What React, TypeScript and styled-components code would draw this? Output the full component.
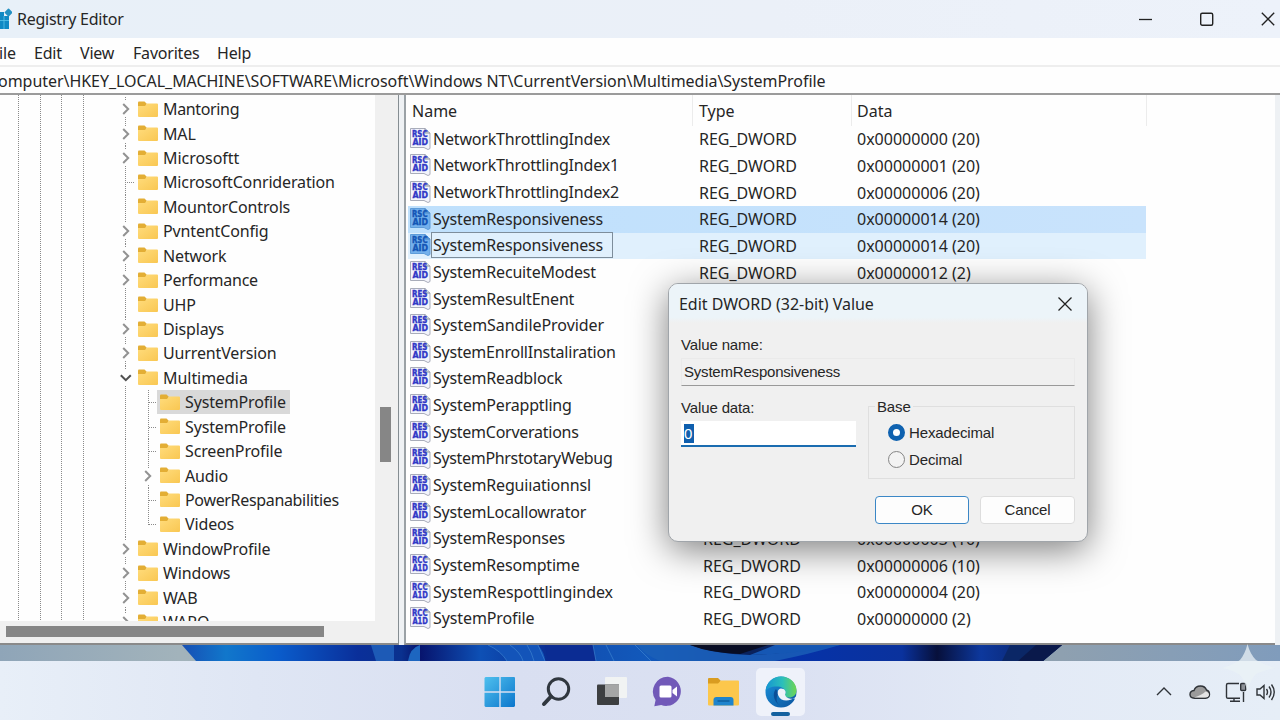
import React from "react";
import styled, { createGlobalStyle, css } from "styled-components";

const GlobalStyle = createGlobalStyle`
  * { box-sizing: border-box; }
  body {
    margin: 0;
    overflow: hidden;
    background: #ffffff;
  }
`;

const Desktop = styled.div`
  position: relative;
  width: 1280px;
  height: 720px;
  overflow: hidden;
  display: flex;
  flex-direction: column;
  font-family: "Noto Sans", "Open Sans", sans-serif;
  font-size: 16px;
  color: #262626;
  white-space: pre;
`;

/* window frame */
const TitleBar = styled.div`
  flex: 0 0 38px;
  display: flex;
  align-items: center;
  background: linear-gradient(to right, #e8f0f8, #ebf0f8 60%, #edf2fa);
`;
const Title = styled.div`
  flex: 1;
  margin-left: 5px;
  letter-spacing: -0.25px;
`;
const WindowButtons = styled.div`
  display: flex;
  gap: 47px;
  margin: -1px 5px 0 0;
`;
const MenuBar = styled.div`
  flex: 0 0 29px;
  display: flex;
  align-items: center;
  padding-top: 2px;
  border-bottom: 2px solid #eeeeee;
  background: #fefefe;
`;
const MenuItem = styled.div<{ $width: number }>`
  flex: 0 0 ${(p) => p.$width}px;
  letter-spacing: -0.2px;
`;
const FileLabel = styled.div`
  margin-left: -9px;
`;
const AddressBar = styled.div`
  flex: 0 0 28px;
  display: flex;
  align-items: center;
  padding-top: 2px;
  border-bottom: 2px solid #9b9b9b;
  background: #fefefe;
  letter-spacing: -0.045px;
`;
const AddressText = styled.div`
  margin-left: -12px;
`;
const Panes = styled.div`
  flex: 0 0 550px;
  display: flex;
  background: #eef1f4;
`;

/* left tree */
const TreePane = styled.div`
  width: 399px;
  display: grid;
  grid-template: 526px 22px / 375px 23px;
  border-right: 1px solid #858d92;
  border-bottom: 2px solid #8a8a8a;
  background: #f0f0f0;
`;
const dots = "repeating-linear-gradient(to bottom, #8a8a8a 0 1px, transparent 1px 2px)";
const Tree = styled.div`
  overflow: hidden;
  padding-top: 2px;
  background: ${dots} 18px 0 / 1px 100% no-repeat, ${dots} 40px 0 / 1px 100% no-repeat,
    ${dots} 61px 0 / 1px 100% no-repeat, ${dots} 83px 0 / 1px 100% no-repeat, #fefefe;
`;
const TreeRow = styled.div<{ $child?: boolean; $last?: boolean }>`
  height: 24.43px;
  display: flex;
  align-items: center;
  padding-left: ${(p) => (p.$child ? 140 : 118)}px;
  background: ${dots} 125px 0 / 1px 100% no-repeat
    ${(p) => p.$child && css`, ${dots} 148px 0 / 1px ${p.$last ? "52%" : "100%"} no-repeat`};
`;
const Expander = styled.div<{ $stub?: boolean }>`
  width: 16px;
  height: 16px;
  display: flex;
  background: ${(p) =>
    p.$stub
      ? "repeating-linear-gradient(to right, #8a8a8a 0 1px, transparent 1px 2px) 9px 8px / 9px 1px no-repeat"
      : "#fefefe"};
`;
const NoExpander = styled.div`
  width: 16px;
`;
const TreeLabel = styled.div<{ $selected?: boolean; $track?: number }>`
  height: 24.4px;
  display: flex;
  align-items: center;
  gap: 5px;
  padding: 0 4px 0 3px;
  margin-left: 1px;
  letter-spacing: ${(p) => p.$track ?? -0.14}px;
  background: ${(p) => (p.$selected ? "#d9d9d9" : "transparent")};
`;
const VScroll = styled.div`
  padding: 312px 0 0 5px;
`;
const VThumb = styled.div`
  width: 11px;
  height: 55px;
  background: #868686;
`;
const HScroll = styled.div`
  grid-column: 1 / 3;
  padding: 5px 0 0 6px;
`;
const HThumb = styled.div`
  width: 318px;
  height: 11px;
  background: #868686;
`;

/* value list */
const ListPane = styled.div`
  width: 871px;
  margin-left: 5px;
  border-left: 2px solid #9aa1a6;
  border-bottom: 2px solid #8a8a8a;
  background: #fefefe;
`;
const Header = styled.div`
  height: 31px;
  display: grid;
  grid-template-columns: 287px 159px 295px;
`;
const HeaderCell = styled.div`
  display: flex;
  align-items: center;
  padding: 1px 0 0 6px;
  border-right: 1px solid #ececec;
  &:last-child {
    padding-left: 5px;
  }
`;
const ValueRow = styled.div<{ $tone?: "strong" | "light" }>`
  width: 738px;
  height: 26.66px;
  margin-left: 2px;
  padding-left: 2px;
  display: grid;
  grid-template-columns: 285px 158px 1fr;
  align-items: center;
  background: ${(p) =>
    p.$tone === "strong"
      ? "linear-gradient(to right, #bfe0fc, #c9e3fc)"
      : p.$tone === "light"
        ? "#e0f0fd"
        : "none"};
`;
const NameCell = styled.div`
  display: flex;
  align-items: center;
  height: 26.66px;
  margin-top: -1.5px;
`;
const NameText = styled.div<{ $boxed?: boolean; $track?: number }>`
  height: 26px;
  line-height: 25px;
  padding: 0 9px 0 1px;
  border: 1px solid ${(p) => (p.$boxed ? "#7d8d9b" : "transparent")};
  letter-spacing: ${(p) => p.$track ?? -0.18}px;
`;
const TypeCell = styled.div<{ $shift?: boolean }>`
  padding-left: ${(p) => (p.$shift ? 8 : 4)}px;
`;
const DataCell = styled.div`
  padding-left: 4px;
`;

/* dialog */
const Dialog = styled.div`
  position: absolute;
  left: 668px;
  top: 283px;
  width: 420px;
  height: 259px;
  border: 1px solid #a0a5aa;
  border-radius: 10px;
  background: #f0f0f0;
  box-shadow: 0 8px 36px rgba(0, 0, 0, 0.5);
  font-family: "Liberation Sans", Arial, sans-serif;
  font-size: 15px;
  letter-spacing: -0.13px;
  overflow: hidden;
`;
const DialogTitle = styled.div`
  height: 39px;
  display: flex;
  align-items: center;
  justify-content: space-between;
  padding: 0 14px 0 10px;
  background: linear-gradient(to bottom, #ecf4f9 85%, #f0f0f0);
  font-family: "Noto Sans", "Open Sans", sans-serif;
  font-size: 16px;
  letter-spacing: -0.03px;
`;
const DialogBody = styled.div`
  padding: 11px 12px 0;
`;
const FieldLabel = styled.div`
  height: 20px;
  line-height: 21px;
`;
const ReadonlyField = styled.div`
  height: 28px;
  margin-top: 4px;
  padding: 0 2px;
  line-height: 26px;
  border: 1px solid #eaeaea;
  border-bottom: 1px solid #999999;
  letter-spacing: -0.2px;
`;
const Columns = styled.div`
  display: flex;
  justify-content: space-between;
  margin-top: 11px;
`;
const ValueInput = styled.div`
  width: 175px;
  height: 26px;
  margin-top: 4px;
  padding: 3px 3px;
  background: #ffffff;
  border-bottom: 2px solid #1a6cb0;
`;
const SelectedText = styled.span`
  display: block;
  width: 10px;
  height: 19px;
  line-height: 19px;
  background: #0f5fae;
  color: #ffffff;
`;
const BaseGroup = styled.div`
  width: 207px;
  height: 73px;
  margin-top: 9px;
  border: 1px solid #dfdfdf;
`;
const Legend = styled.div`
  width: max-content;
  height: 18px;
  line-height: 18px;
  margin: -9px 0 0 6px;
  padding: 0 2px;
  background: #f0f0f0;
`;
const RadioRow = styled.div`
  height: 27.5px;
  display: flex;
  align-items: center;
  gap: 4px;
  padding: 5px 0 0 19px;
`;
const Radio = styled.span<{ $on?: boolean }>`
  width: 17px;
  height: 17px;
  border-radius: 50%;
  border: ${(p) => (p.$on ? "5.5px solid #0f62b0" : "1px solid #858585")};
  background: ${(p) => (p.$on ? "#ffffff" : "#f3f3f3")};
`;
const Actions = styled.div`
  display: flex;
  justify-content: flex-end;
  gap: 11px;
  margin-top: 17px;
`;
const Button = styled.div<{ $primary?: boolean }>`
  width: ${(p) => (p.$primary ? 94 : 95)}px;
  height: 28px;
  line-height: 26px;
  text-align: center;
  border: 1px solid ${(p) => (p.$primary ? "#3b87c6" : "#dddddd")};
  border-radius: 4px;
  background: #fdfdfd;
`;

/* desktop bottom */
const Wallpaper = styled.div`
  flex: 0 0 16px;
  display: flex;
`;
const Taskbar = styled.div`
  flex: 0 0 59px;
  display: flex;
  align-items: center;
  padding: 3px 4px 0 475px;
  background: linear-gradient(to right, #e8eff8 0, #dfe6f4 20%, #d9dff1 40%, #dbe1f2 62%, #e3eaf6 80%, #e6eef7 100%);
`;
const Apps = styled.div`
  flex: 1;
  display: flex;
  gap: 7px;
`;
const AppSlot = styled.div<{ $active?: boolean }>`
  width: 49px;
  height: 48px;
  display: flex;
  flex-direction: column;
  align-items: center;
  justify-content: center;
  border-radius: 5px;
  background: ${(p) => (p.$active ? "#eff2fa" : "none")};
  margin-left: ${(p) => (p.$active ? 1 : 0)}px;
`;
const ActiveMark = styled.div`
  width: 19px;
  height: 4px;
  margin: 4px 0 -8px;
  border-radius: 2px;
  background: #14619f;
`;
const Tray = styled.div`
  display: flex;
  align-items: center;
`;
const Sparkle = styled.svg`
  position: absolute;
  left: 1222px;
  top: 644px;
`;

const FolderIcon = () => (
  <svg width="20" height="17" viewBox="0 0 20 17">
    <defs>
      <linearGradient id="fold" x1="0" y1="0" x2="1" y2="1">
        <stop offset="0" stopColor="#ffdc7c" />
        <stop offset="1" stopColor="#f9c752" />
      </linearGradient>
    </defs>
    <path d="M0 1.500Q0 .5 1 .5H6.500L8.500 2.500V6H0Z" fill="#e3ae35" />
    <path d="M0 5H7L9 2.500H19Q20 2.500 20 3.500V15Q20 16 19 16H1Q0 16 0 15Z" fill="url(#fold)" />
  </svg>
);

const Chevron = ({ open }: { open?: boolean }) => (
  <svg width="16" height="16" viewBox="0 0 16 16" fill="none" stroke={open ? "#505050" : "#929292"} strokeWidth="2">
    {open ? <path d="M2.800 5.200L7.800 10.200L12.800 5.200" /> : <path d="M5.200 3L10.200 8L5.200 13" />}
  </svg>
);

const RegIcon = ({ text, tint }: { text: string[]; tint?: boolean }) => (
  <svg width="21" height="22" viewBox="0 0 21 22">
    <path
      d="M.5 .5H15L20 5V20.500L18 21.500L14 19.500H.5Z"
      fill={tint ? "#74b0ec" : "#f3f4fb"}
      stroke={tint ? "#5e9cd9" : "#a9adba"}
    />
    <path d="M15 .5V5H20" fill={tint ? "#5f9ee0" : "#dcdfe8"} stroke={tint ? "#4b86c4" : "#8d919c"} />
    <g
      fill={tint ? "#1355b5" : "#3038c6"}
      stroke={tint ? "#1355b5" : "#3038c6"}
      strokeWidth=".35"
      fontFamily="DejaVu Sans"
      fontWeight="700"
      fontSize="8"
      letterSpacing="0"
    >
      <text x="2" y="9.200" textLength="15.500" lengthAdjust="spacingAndGlyphs">{text[0]}</text>
      <text x="2.400" y="16.800" textLength="15.500" lengthAdjust="spacingAndGlyphs">{text[1]}</text>
    </g>
  </svg>
);

type Node = {
  name: string;
  arrow?: "closed" | "open";
  stub?: boolean;
  child?: boolean;
  selected?: boolean;
  last?: boolean;
  track?: number;
};
const nodes: Node[] = [
  { name: "Mantoring", arrow: "closed", track: -0.35 },
  { name: "MAL", arrow: "closed" },
  { name: "Microsoftt", arrow: "closed", track: -0.05 },
  { name: "MicrosoftConrideration", stub: true },
  { name: "MountorControls" },
  { name: "PvntentConfig", arrow: "closed" },
  { name: "Network", arrow: "closed" },
  { name: "Performance", arrow: "closed", track: -0.25 },
  { name: "UHP" },
  { name: "Displays", arrow: "closed" },
  { name: "UurrentVersion", arrow: "closed" },
  { name: "Multimedia", arrow: "open", track: -0.05 },
  { name: "SystemProfile", child: true, stub: true, selected: true },
  { name: "SystemProfile", child: true, stub: true },
  { name: "ScreenProfile", child: true, stub: true },
  { name: "Audio", child: true, arrow: "closed" },
  { name: "PowerRespanabilities", child: true, stub: true, track: -0.33 },
  { name: "Videos", child: true, stub: true, last: true },
  { name: "WindowProfile", arrow: "closed" },
  { name: "Windows", arrow: "closed" },
  { name: "WAB", arrow: "closed" },
  { name: "WARO", arrow: "closed" },
];

const RSC = ["RSC", "AID"];
const RES = ["RES", "AID"];
const RCC = ["RCC", "A1D"];
type Value = {
  name: string;
  icon: string[];
  data?: string;
  tone?: "strong" | "light";
  boxed?: boolean;
  shift?: boolean;
  track?: number;
};
const values: Value[] = [
  { name: "NetworkThrottlingIndex", icon: RSC, data: "0x00000000 (20)" },
  { name: "NetworkThrottlingIndex1", icon: RSC, data: "0x00000001 (20)" },
  { name: "NetworkThrottlingIndex2", icon: RSC, data: "0x00000006 (20)" },
  { name: "SystemResponsiveness", icon: RSC, data: "0x00000014 (20)", tone: "strong" },
  { name: "SystemResponsiveness", icon: RSC, data: "0x00000014 (20)", tone: "light", boxed: true },
  { name: "SystemRecuiteModest", icon: RES, data: "0x00000012 (2)" },
  { name: "SystemResultEnent", icon: RES },
  { name: "SystemSandileProvider", icon: RES, track: -0.05 },
  { name: "SystemEnrollInstaliration", icon: RES, track: -0.22 },
  { name: "SystemReadblock", icon: RES },
  { name: "SystemPerapptling", icon: RES },
  { name: "SystemCorverations", icon: RES, track: -0.26 },
  { name: "SystemPhrstotaryWebug", icon: RES, track: -0.33 },
  { name: "SystemReguiıationnsl", icon: RES },
  { name: "SystemLocallowrator", icon: RES },
  { name: "SystemResponses", icon: RES, data: "0x00000003 (10)", shift: true },
  { name: "SystemResomptime", icon: RCC, data: "0x00000006 (10)", shift: true },
  { name: "SystemRespottlingindex", icon: RCC, data: "0x00000004 (20)", shift: true, track: -0.05 },
  { name: "SystemProfile", icon: RCC, data: "0x00000000 (2)", shift: true, track: -0.1 },
];

const AppIcon = () => (
  <svg width="12" height="24" viewBox="0 0 12 24">
    <path d="M0 5H4V9H9V22H0Z" fill="#1089c4" />
    <path d="M0 13.500H9M4 9V22" stroke="#5cc4ea" strokeWidth=".8" />
    <rect x="5.500" y="2.500" width="6" height="6" rx=".8" transform="rotate(45 8.500 5.500)" fill="#2390c2" />
  </svg>
);

const WallpaperArt = () => (
  <svg width="1280" height="16" viewBox="0 0 1280 16">
    <defs>
      <linearGradient id="sky" x1="0" x2="1">
        <stop offset="0" stopColor="#8fa5b8" />
        <stop offset=".14" stopColor="#a2b3bb" />
        <stop offset=".83" stopColor="#8ea0b0" />
        <stop offset="1" stopColor="#809cbc" />
      </linearGradient>
      <linearGradient id="bloom" gradientUnits="userSpaceOnUse" x1="182" x2="1060">
        <stop offset="0" stopColor="#174fb4" />
        <stop offset=".05" stopColor="#1177cb" />
        <stop offset=".11" stopColor="#0a5ccb" />
        <stop offset=".2" stopColor="#0a2f9a" />
        <stop offset=".25" stopColor="#0a318f" />
        <stop offset=".27" stopColor="#07136c" />
        <stop offset=".34" stopColor="#0e50b5" />
        <stop offset=".42" stopColor="#0a2c92" />
        <stop offset=".47" stopColor="#1252b4" />
        <stop offset=".53" stopColor="#1259bb" />
        <stop offset=".62" stopColor="#0f3f9f" />
        <stop offset=".7" stopColor="#0632a8" />
        <stop offset=".82" stopColor="#0a329d" />
        <stop offset=".86" stopColor="#07103b" />
        <stop offset=".91" stopColor="#0d389d" />
        <stop offset="1" stopColor="#0a1c55" />
      </linearGradient>
    </defs>
    <rect width="1280" height="16" fill="url(#sky)" />
    <path d="M182 0H1062L1043 16H196Z" fill="url(#bloom)" />
    <path d="M371 0H394V16H376Z" fill="#1d5ab6" />
    <path d="M408 16Q410 3 420 0V16Z" fill="#1d66c0" />
    <path d="M488 0Q501 6 507 16H541L545 16Q545 8 538 0Z" fill="#1354b9" />
    <path d="M545 0H593L596 16H548Z" fill="#0b2c93" />
    <path
      d="M488 0Q501 6 507 16M510 0Q521 8 523 16M527 0Q532 8 534 16M538 0L545 16M593 0L596 16M606 0L614 16M635 0L651 16"
      fill="none"
      stroke="#3c82cf"
      opacity=".7"
    />
    <path d="M690 0H840Q810 9 775 16H660Q645 10 637 0Z" fill="#1c60b8" opacity=".8" />
    <path d="M690 0H835Q785 9 750 10Q715 9 690 0Z" fill="#0a225d" />
    <path d="M690 0H768L740 9Q710 8 690 0Z" fill="#080d24" />
    <path d="M775 0H840Q800 9 750 10Z" fill="#1557b4" />
    <path d="M1010 0H1062L1043 16H1002Z" fill="#0b2766" />
    <path d="M1036 0H1062L1043 16H1018Z" fill="#0a194b" />
  </svg>
);

const App: React.FC = () => {
  return (
    <Desktop>
      <GlobalStyle />
      <TitleBar>
        <AppIcon />
        <Title>Registry Editor</Title>
        <WindowButtons>
          <svg width="14" height="16" viewBox="0 0 14 16">
            <path d="M0 8.500H13" stroke="#222" strokeWidth="1.300" />
          </svg>
          <svg width="14" height="16" viewBox="0 0 14 16">
            <rect x=".7" y="2.200" width="12" height="12" rx="1.500" fill="none" stroke="#222" strokeWidth="1.400" />
          </svg>
          <svg width="14" height="16" viewBox="0 0 14 16">
            <path d="M.8 1.800L13.200 14.200M13.200 1.800L.8 14.200" stroke="#222" strokeWidth="1.300" />
          </svg>
        </WindowButtons>
      </TitleBar>
      <MenuBar>
        <MenuItem $width={34}>
          <FileLabel>File</FileLabel>
        </MenuItem>
        <MenuItem $width={46}>Edit</MenuItem>
        <MenuItem $width={53}>View</MenuItem>
        <MenuItem $width={84}>Favorites</MenuItem>
        <MenuItem $width={50}>Help</MenuItem>
      </MenuBar>
      <AddressBar>
        <AddressText>
          Computer\HKEY_LOCAL_MACHINE\SOFTWARE\Microsoft\Windows NT\CurrentVersion\Multimedia\SystemProfile
        </AddressText>
      </AddressBar>
      <Panes>
        <TreePane>
          <Tree>
            {nodes.map((n, i) => (
              <TreeRow key={i} $child={n.child} $last={n.last}>
                {n.arrow ? (
                  <Expander>
                    <Chevron open={n.arrow === "open"} />
                  </Expander>
                ) : n.stub ? (
                  <Expander $stub />
                ) : (
                  <NoExpander />
                )}
                <TreeLabel $selected={n.selected} $track={n.track}>
                  <FolderIcon />
                  {n.name}
                </TreeLabel>
              </TreeRow>
            ))}
          </Tree>
          <VScroll>
            <VThumb />
          </VScroll>
          <HScroll>
            <HThumb />
          </HScroll>
        </TreePane>
        <ListPane>
          <Header>
            <HeaderCell>Name</HeaderCell>
            <HeaderCell>Type</HeaderCell>
            <HeaderCell>Data</HeaderCell>
          </Header>
          {values.map((v, i) => (
            <ValueRow key={i} $tone={v.tone}>
              <NameCell>
                <RegIcon text={v.icon} tint={!!v.tone} />
                <NameText $boxed={v.boxed} $track={v.track}>
                  {v.name}
                </NameText>
              </NameCell>
              {v.data && (
                <>
                  <TypeCell $shift={v.shift}>REG_DWORD</TypeCell>
                  <DataCell>{v.data}</DataCell>
                </>
              )}
            </ValueRow>
          ))}
        </ListPane>
      </Panes>
      <Wallpaper>
        <WallpaperArt />
      </Wallpaper>
      <Taskbar>
        <Apps>
          <AppSlot>
            <svg width="32" height="32" viewBox="0 0 32 32">
              <defs>
                <linearGradient id="win" x1="0" y1="0" x2="1" y2="1">
                  <stop offset="0" stopColor="#4fc0ee" />
                  <stop offset="1" stopColor="#0c76cc" />
                </linearGradient>
              </defs>
              <path
                d="M1.500 1H15.300V15.300H.5V2ZM16.700 1H30Q31 1 31 2V15.300H16.700ZM.5 16.700H15.300V31H1.500L.5 30ZM16.700 16.700H31V30L30 31H16.700Z"
                fill="url(#win)"
              />
            </svg>
          </AppSlot>
          <AppSlot>
            <svg width="32" height="32" viewBox="0 0 32 32" fill="none" stroke="#30373f">
              <circle cx="18.500" cy="13" r="10.200" strokeWidth="3" />
              <path d="M11 20.500L4 28" strokeWidth="4" strokeLinecap="round" />
            </svg>
          </AppSlot>
          <AppSlot>
            <svg width="32" height="32" viewBox="0 0 32 32">
              <rect x="9" y="1" width="22" height="21" rx="1" fill="#f1f3f3" />
              <path d="M1 9.500Q1 8.500 2 8.500H23V28Q23 29 22 29H2Q1 29 1 28Z" fill="#3d3f41" />
              <path d="M9 8.500H23V21H9Z" fill="#a5a6a6" />
            </svg>
          </AppSlot>
          <AppSlot>
            <svg width="32" height="32" viewBox="0 0 32 32">
              <path d="M16 .8A14.600 14.600 0 1 1 9.200 29L2.300 30.200L3.600 24A14.800 14.800 0 0 1 16 .8Z" fill="#7159b8" />
              <rect x="7.500" y="9.500" width="12" height="12" rx="1.500" fill="#fff" />
              <path d="M20.500 14L25 10.500V20.500L20.500 17Z" fill="#fff" />
            </svg>
          </AppSlot>
          <AppSlot>
            <svg width="34" height="32" viewBox="0 0 34 32">
              <path d="M1 3Q1 2 2 2H11L13.500 4.500V9H1Z" fill="#d99c20" />
              <path d="M1 7.500H11L14 4.500H31Q32 4.500 32 5.500V28.500Q32 29.500 31 29.500H2Q1 29.500 1 28.500Z" fill="#fcc74c" />
              <path d="M6.500 29.500V24Q6.500 21 9.500 21H23.500Q26.500 21 26.500 24V29.500Z" fill="#1e84cd" />
              <path d="M10.500 25H22.500" stroke="#1168aa" strokeWidth="2" />
            </svg>
          </AppSlot>
          <AppSlot $active>
            <svg width="32" height="32" viewBox="0 0 32 32">
              <defs>
                <linearGradient id="edgeTop" x1="0" x2="1">
                  <stop offset="0" stopColor="#1595d2" />
                  <stop offset=".55" stopColor="#2cbfba" />
                  <stop offset="1" stopColor="#6fd650" />
                </linearGradient>
                <linearGradient id="edgeLow" x1="0" x2="1" y2="1">
                  <stop offset="0" stopColor="#1b91da" />
                  <stop offset="1" stopColor="#0b549f" />
                </linearGradient>
              </defs>
              <circle cx="16" cy="16" r="15.500" fill="url(#edgeLow)" />
              <path
                d="M.6 15C1.500 6 8 .5 16 .5C25 .5 31.500 7 31.500 14.500C31.500 19 28 21.500 24 21.500C20.500 21.500 19 20 20 18.500C22 15 18.500 11 13 10.500C7 10 2.500 12 .6 15Z"
                fill="url(#edgeTop)"
              />
              <path d="M11 13C6.500 18 9 27 17 30.500C10 28 11 20 13.500 17.500Z" fill="#0b4f98" />
              <path
                d="M20 18.500C22 15.500 19.500 12.500 16 12.500C12.500 13 12 17 13.500 20C16 25.500 24 26.500 31.500 20.500L32 23.500L29.500 22.500C26 23.500 21 22.500 20 18.500Z"
                fill="#eff2fa"
              />
            </svg>
            <ActiveMark />
          </AppSlot>
        </Apps>
        <Tray>
          <svg width="120" height="24" viewBox="0 0 120 24" fill="none" stroke="#2f3338" strokeWidth="1.400">
            <path d="M1 15L8 8L15 15" />
            <path
              d="M38.500 18.300Q34 18 34 14.500Q34 11 38 10.500Q39.500 6 44.500 6Q49 6 50.500 10Q53.500 11 53.500 14.300Q53.500 18 49.500 18.300Z"
              fill="#9b9b9b"
            />
            <path d="M38 17.500Q46 15 49.500 11.500Q53 12 53 15Q52.500 17.500 49 17.500Z" fill="#e4e4e4" stroke="none" />
            <path d="M83 3.500H72Q70.500 3.500 70.500 5V17Q70.500 18.300 72 18.300H84M78 18.300V21M74 21.300H84M87.500 12V22" />
            <rect x="84.700" y="3.500" width="5" height="7" rx="1" fill="#8d9197" />
            <path d="M101 9H104L108 5.500V18.500L104 15H101Z" />
            <path d="M110.500 9Q112.500 12 110.500 15M113 6.500Q117 12 113 17.500M115.500 4.500Q121 12 115.500 20" />
          </svg>
        </Tray>
      </Taskbar>
      <Sparkle width="54" height="48" viewBox="0 0 54 48">
        <path d="M25.500 0Q28 10 34 16Q42 21 54 24Q40 26 33 31Q28 37 25.500 48Q23 37 18 31Q11 26 0 24Q11 21 18 16Q23 10 25.500 0Z" fill="#eaf2f6" opacity=".75" />
      </Sparkle>
      <Dialog>
        <DialogTitle>
          Edit DWORD (32-bit) Value
          <svg width="16" height="16" viewBox="0 0 16 16">
            <path d="M1.500 1.500L14.500 14.500M14.500 1.500L1.500 14.500" stroke="#222" strokeWidth="1.300" />
          </svg>
        </DialogTitle>
        <DialogBody>
          <FieldLabel>Value name:</FieldLabel>
          <ReadonlyField>SystemResponsiveness</ReadonlyField>
          <Columns>
            <div>
              <FieldLabel>Value data:</FieldLabel>
              <ValueInput>
                <SelectedText>0</SelectedText>
              </ValueInput>
            </div>
            <BaseGroup>
              <Legend>Base</Legend>
              <RadioRow>
                <Radio $on />
                Hexadecimal
              </RadioRow>
              <RadioRow>
                <Radio />
                Decimal
              </RadioRow>
            </BaseGroup>
          </Columns>
          <Actions>
            <Button $primary>OK</Button>
            <Button>Cancel</Button>
          </Actions>
        </DialogBody>
      </Dialog>
    </Desktop>
  );
};

export default App;
